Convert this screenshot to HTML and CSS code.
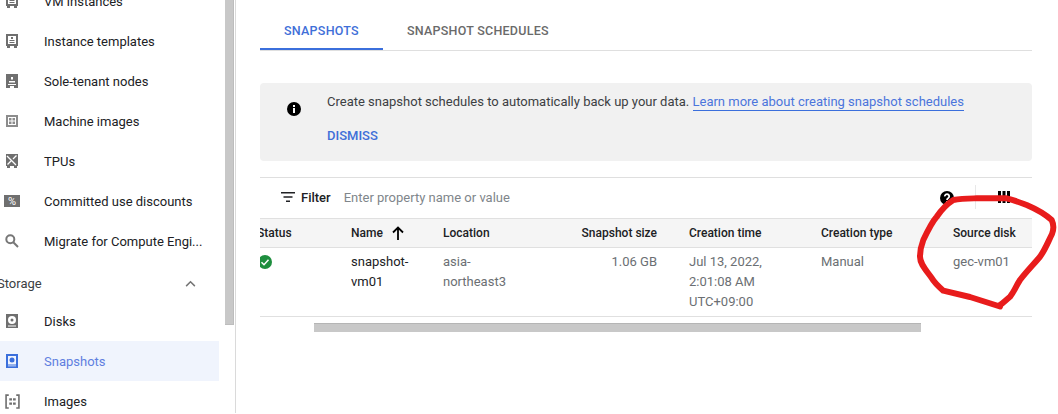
FILE: index.html
```html
<!DOCTYPE html>
<html lang="en">
<head>
<meta charset="utf-8">
<title>Snapshots</title>
<link rel="stylesheet" href="styles.css">
</head>
<body>
<div class="page">
  <nav class="sidebar">
    <ul class="nav">
      <li class="nav-item"><svg class="ico" viewBox="0 0 12 14"><path d="M0 0h12v12h-1v2H8v-2H4v2H1v-2H0z"/><path class="cut" d="M2 2h8v8H2z"/><path d="M5 3h2v2H5zM3.500 6h5v1h-5zM3.500 8h5v1h-5z"/></svg><span>VM instances</span></li>
      <li class="nav-item"><svg class="ico" viewBox="0 0 12 14"><path d="M0 0h12v12h-1v2H8v-2H4v2H1v-2H0z"/><path class="cut" d="M2 2h8v8H2z"/><path d="M5 3h2v2H5zM3.500 6h5v1h-5zM3.500 8h5v1h-5z"/></svg><span>Instance templates</span></li>
      <li class="nav-item"><svg class="ico" viewBox="0 0 12 14"><path d="M0 0h12v14H0z"/><path class="cut" d="M5 3h2v2.500H5zM3 7h6v1.500H3zM2 10h8v1H2zM4 12h4v2H4z"/></svg><span>Sole-tenant nodes</span></li>
      <li class="nav-item"><svg class="ico faded" viewBox="0 0 12 14"><path d="M0 1h12v12H0z"/><path class="cut" d="M2 3h8v8H2z"/><path d="M3 4h2.500v2.500H3zM6.500 4H9v2.500H6.500zM3 7.500h2.500V10H3zM6.500 7.500H9V10H6.500z"/></svg><span>Machine images</span></li>
      <li class="nav-item"><svg class="ico" viewBox="0 0 12 14"><path d="M0 0h12v12h-1v2H8v-2H4v2H1v-2H0z"/><path class="cut-line" d="M1 2l9 9M10.500 1.500L7 5M5 7l-3.500 3.500"/></svg><span>TPUs</span></li>
      <li class="nav-item"><span class="ico-pct">%</span><span>Committed use discounts</span></li>
      <li class="nav-item"><svg class="ico-search" viewBox="0 0 14 14"><circle cx="5.300" cy="5.300" r="4"/><path d="M8.300 8.300L13 13"/></svg><span class="ellip">Migrate for Compute Engi...</span></li>
      <li class="nav-section"><span>Storage</span><svg class="chev" viewBox="0 0 12 8"><path d="M1 7l5-5 5 5"/></svg></li>
      <li class="nav-item"><svg class="ico" viewBox="0 0 12 14"><path d="M0 0h12v14H0z"/><circle class="cut" cx="6" cy="6" r="4"/><circle cx="6" cy="6" r="1.500"/><path class="cut" d="M2 11.500h8v1H2z"/></svg><span>Disks</span></li>
      <li class="nav-item active"><svg class="ico" viewBox="0 0 12 14"><path d="M0 0h12v14H0z"/><path class="cut" d="M2 2h8v8.500H2z"/><circle cx="6" cy="6" r="2.500"/><path class="cut" d="M2 11.500h8v.8H2z"/></svg><span>Snapshots</span></li>
      <li class="nav-item"><svg class="ico-img" viewBox="0 0 14 14"><path class="frame" d="M3.500 1H1v12h2.500M10.500 1H13v12h-2.500"/><path class="fill" d="M4 4h2.500v2H4zM7.500 4H10v2H7.500zM4 8h2.500v2H4zM7.500 8H10v2H7.500z"/></svg><span>Images</span></li>
    </ul>
  </nav>
  <div class="rail"><div class="rail-thumb"></div></div>
  <main class="main">
    <div class="tabs">
      <div class="tab current">SNAPSHOTS</div>
      <div class="tab">SNAPSHOT SCHEDULES</div>
    </div>
    <section class="banner">
      <svg class="info" viewBox="0 0 14 14"><circle cx="7" cy="7" r="7"/><path class="white" d="M6 6h2v5H6zM6 3h2v2H6z"/></svg>
      <div class="banner-body">
        <p class="banner-text">Create snapshot schedules to automatically back up your data. <a class="link">Learn more about creating snapshot schedules</a></p>
        <div class="dismiss">DISMISS</div>
      </div>
    </section>
    <div class="filter">
      <svg class="filter-ico" viewBox="0 0 14 10"><path d="M0 0h14v1.500H0zM2.500 4.200h9v1.500h-9zM5 8.500h4V10H5z"/></svg>
      <span class="filter-label">Filter</span>
      <span class="filter-input">Enter property name or value</span>
      <svg class="help" viewBox="0 0 14 14"><circle cx="7" cy="7" r="7"/><path class="white-line" d="M4.800 5.400a2.200 2.200 0 1 1 3.500 1.700c-.9.600-1.300 1-1.300 1.900"/><path class="white" d="M6.100 10h1.800v1.700H6.100z"/></svg>
      <span class="divider"></span>
      <svg class="cols" viewBox="0 0 12 12"><path d="M0 0h3v12H0zM4.500 0h3v12h-3zM9 0h3v12H9z"/></svg>
    </div>
    <div class="table-wrap">
      <div class="grid head">
        <div>Status</div>
        <div class="name-head">Name<svg class="arrow" viewBox="0 0 12 14"><path d="M6 14V2M1 6.500L6 1.500l5 5"/></svg></div>
        <div>Location</div>
        <div class="right">Snapshot size</div>
        <div class="time">Creation time</div>
        <div>Creation type</div>
        <div>Source disk</div>
      </div>
      <div class="grid row">
        <div><svg class="ok" viewBox="0 0 14 14"><circle cx="7" cy="7" r="7"/><path d="M3.500 7.200l2.500 2.500 4.500-5"/></svg></div>
        <div class="dark">snapshot-<br>vm01</div>
        <div>asia-<br>northeast3</div>
        <div class="right">1.06 GB</div>
        <div class="time">Jul 13, 2022,<br>2:01:08 AM<br>UTC+09:00</div>
        <div>Manual</div>
        <div>gec-vm01</div>
      </div>
    </div>
    <div class="hscroll"><div class="hthumb"></div></div>
  </main>
  <svg class="scribble" viewBox="0 0 1058 414"><path d="M1000 306.500L970 297 943.300 290.700C938 286 934 282 931.700 278 926 270 920 264 920 256.700 920 250 921 246 923.300 240 928 230 932 222 936.700 216.700 942 209 947 204 953.300 200 962 198.500 970 198.500 976.700 198.300L1006.700 198.300C1014 200 1020 202.500 1026.700 205 1036 209 1045 214 1051.700 220 1054 225 1054 229 1052 234 1048 242 1045 250 1040 256.700 1033 265 1026 272 1020 280 1016 286 1014 292 1010 296.700 1006 300 1003 303 1000 305"/></svg>
</div>
</body>
</html>
```

FILE: styles.css
```css
* { box-sizing: border-box; }
html, body { margin: 0; padding: 0; background: #fff; }
body { font-family: Roboto, "Liberation Sans", sans-serif; font-size: 13px; color: #202124; }
.page { position: relative; display: flex; width: 1058px; height: 414px; overflow: hidden; }

.sidebar { width: 225px; flex: none; overflow: hidden; }
.nav { list-style: none; margin: -19px 0 0; padding: 0; }
.nav-item { display: flex; align-items: center; height: 40px; width: 219px; padding-left: 6px; color: #202124; }
.nav-item > span:last-child { margin-left: 26px; }
.nav-section { display: flex; align-items: center; justify-content: space-between; height: 40px; padding: 5px 20px 0 0; width: 219px; margin-left: -3px; color: #3c4043; }
.active { background: #f0f4fd; color: #5f7fe0; }

.ico { width: 12px; height: 14px; flex: none; fill: #6f6f6f; }
.ico .cut { fill: #fff; }
.ico .cut-line { fill: none; stroke: #fff; stroke-width: 1.300; }
.ico.faded { fill: #8c8c8c; }
.active .ico { fill: #3b6fdc; }
.active .ico .cut { fill: #f0f4fd; }
.ico-pct { display: flex; align-items: center; justify-content: center; width: 16px; height: 12px; margin-left: -2px; margin-right: -2px; flex: none; background: #6f6f6f; color: #fff; font-size: 11px; }
.ico-search { width: 14px; height: 14px; margin: 0 -1px; flex: none; fill: none; stroke: #777; stroke-width: 2; }
.ico-img { width: 15px; height: 15px; margin: 0 -2px 0 -1px; flex: none; }
.ico-img .frame { fill: none; stroke: #6f6f6f; stroke-width: 1.500; }
.ico-img .fill { fill: #6f6f6f; }
.chev { width: 11px; height: 7px; fill: none; stroke: #757575; stroke-width: 1.700; }

.rail { width: 11px; flex: none; height: 413px; border-right: 1px solid #dadada; }
.rail-thumb { width: 9px; height: 325px; background: #c8c8c8; border-right: 1px solid #bdbdbd; border-bottom: 1px solid #bdbdbd; }

.main { width: 772px; margin-left: 24px; flex: none; }
.tabs { display: flex; height: 51px; padding-top: 20px; border-bottom: 1px solid #dfdfdf; }
.tab { height: 30px; padding: 3px 24px 0; font-weight: 500; letter-spacing: .25px; color: #6a6a6a; font-size: 12.500px; line-height: 16px; }
.current { color: #3f6fd8; border-bottom: 2px solid #3b6fdc; }

.banner { display: flex; height: 78px; margin-top: 32px; padding: 11px 0 0 27px; background: #f1f1f1; border-radius: 4px; }
.info { width: 14px; height: 14px; margin-top: 8px; flex: none; fill: #000; }
.white { fill: #fff; }
.white-line { fill: none; stroke: #fff; stroke-width: 1.800; }
.banner-body { margin-left: 26px; }
.banner-text { margin: 0; line-height: 15px; color: #3c4043; }
.link { color: #4b75dc; border-bottom: 1px solid #3b6fdc; padding-bottom: 1px; }
.dismiss { margin-top: 19px; font-weight: 500; color: #3f6fd8; line-height: 15px; }

.filter { display: flex; align-items: center; height: 41px; margin-top: 16px; padding: 0 0 2px 21px; border-top: 1px solid #dfdfdf; }
.filter-ico { width: 14px; height: 10px; flex: none; fill: #202124; }
.filter-label { margin-left: 6px; font-weight: 500; color: #202124; }
.filter-input { margin-left: 13px; color: #80868b; flex: 1; }
.help { width: 14px; height: 14px; margin-top: 1px; flex: none; fill: #000; }
.divider { width: 1px; height: 24px; margin-left: 21px; background: #e8e8e8; }
.cols { width: 12px; height: 12px; margin: 0 22px; flex: none; fill: #000; }

.table-wrap { overflow: hidden; }
.grid { display: grid; grid-template-columns: 94px 92px 114px 100px 164px 132px 79px; margin-left: -3px; }
.time { padding-left: 32px; }
.head { height: 30px; align-items: center; background: #f5f5f5; border-top: 1px solid #e0e0e0; border-bottom: 1px solid #e0e0e0; font-weight: 500; color: #202124; font-size: 12px; }
.row { height: 69px; padding-top: 4px; border-bottom: 1px solid #e0e0e0; line-height: 20px; color: #6b6f73; }
.right { text-align: right; }
.dark { color: #202124; }
.name-head { display: flex; align-items: center; }
.arrow { width: 12px; height: 14px; margin-left: 9px; fill: none; stroke: #000; stroke-width: 1.800; }
.ok { width: 14px; height: 14px; margin: 3px 0 0 1px; fill: #1e8e3e; stroke: none; display: block; }
.ok path { fill: none; stroke: #fff; stroke-width: 1.500; }

.hscroll { padding: 6px 111px 0 54px; }
.hthumb { height: 9px; background: #c8c8c8; border-top: 1px solid #b5b5b5; }

.scribble { position: absolute; left: 0; top: 0; width: 1058px; height: 414px; fill: none; stroke: #e81c1c; stroke-width: 6px; stroke-linecap: round; stroke-linejoin: round; pointer-events: none; }
```
